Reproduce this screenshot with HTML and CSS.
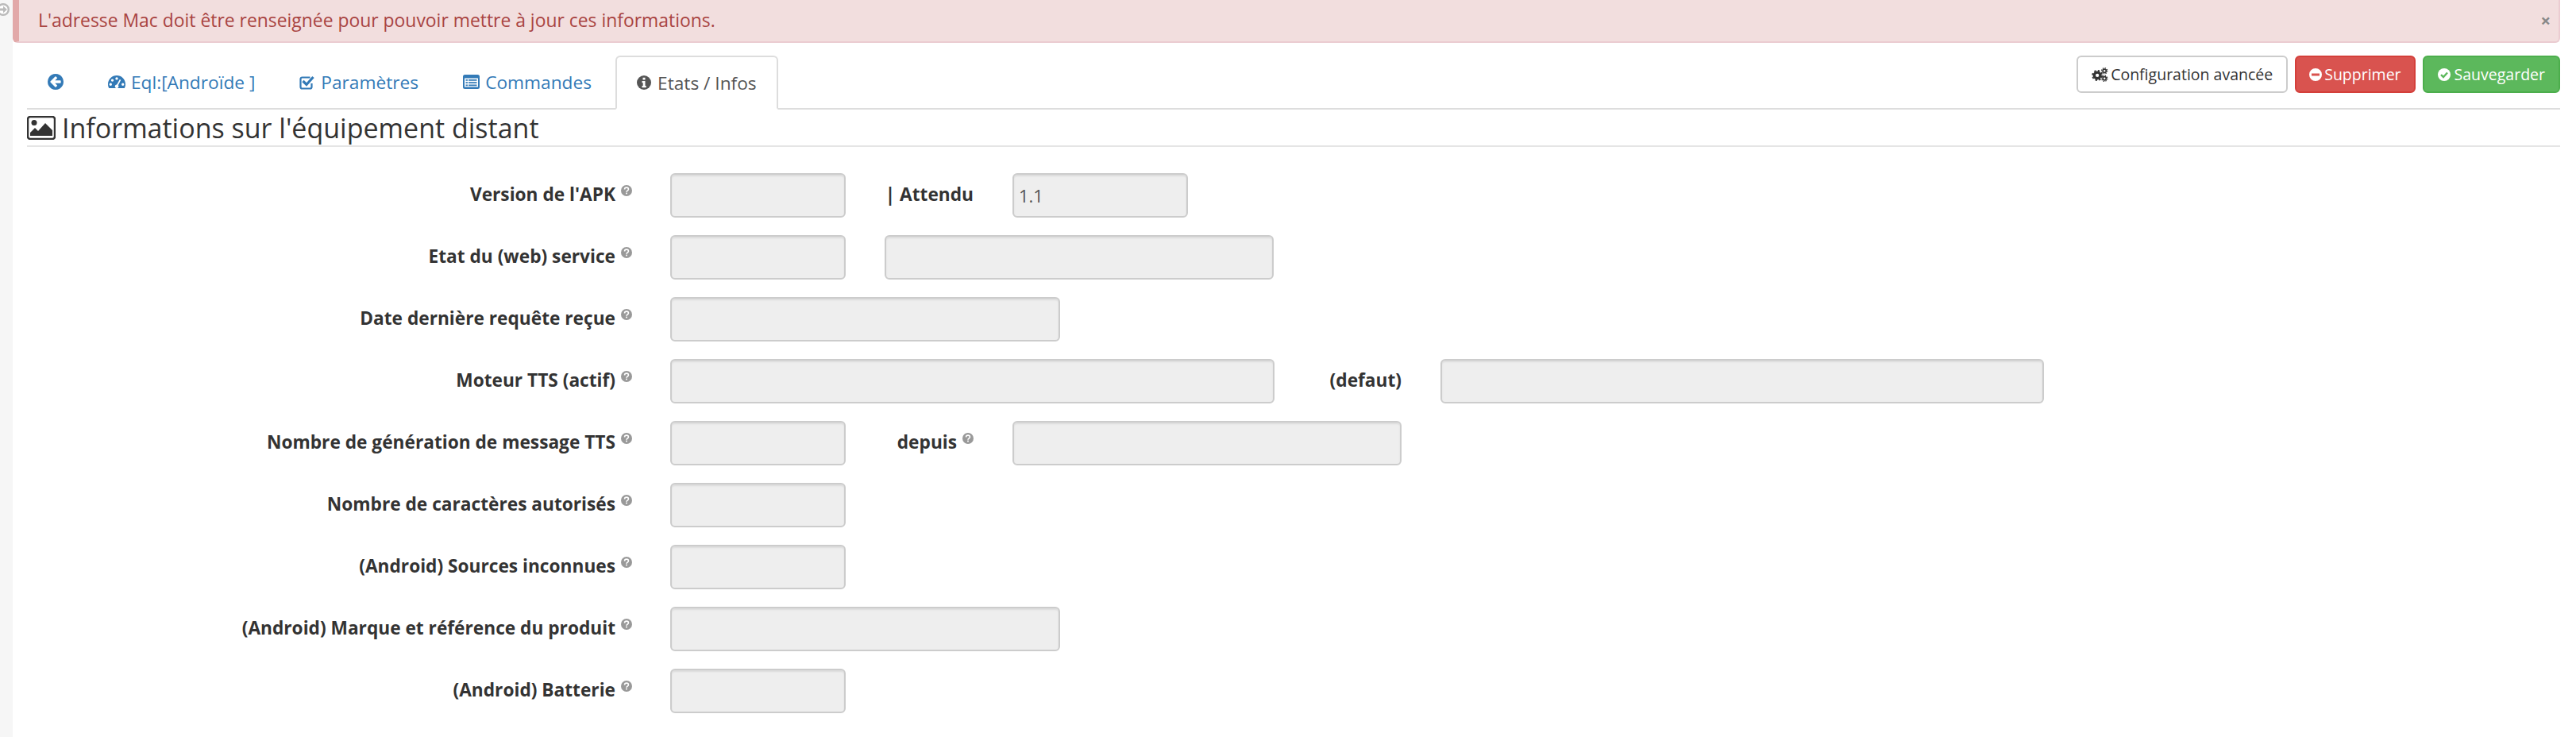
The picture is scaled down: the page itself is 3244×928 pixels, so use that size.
FILE: index.html

```html
<!DOCTYPE html>
<html lang="en">
<head>
    <meta charset="UTF-8">
    <title>Equipement</title>
    <link rel="stylesheet" href="styles.css">
</head>
<body>
    <svg class="defs" width="0" height="0">
        <symbol id="q" viewBox="0 0 16 16">
            <circle cx="8" cy="8" r="8" fill="currentColor"/>
            <path d="M5.2 6.2c0-1.6 1.2-2.6 2.8-2.6s2.8 1 2.8 2.4c0 2.2-2.8 2-2.8 4" fill="none" stroke="#fff" stroke-width="1.9"/>
            <rect x="7" y="11" width="2" height="2" fill="#fff"/>
        </symbol>
    </svg>

    <div class="side">
        <svg class="side-toggle" viewBox="0 0 16 16"><circle cx="8" cy="8" r="6.800" fill="#fff" stroke="#bbb" stroke-width="2.400"/><path d="M3 6.5h5V3.5L13 8l-5 4.500V9.500H3z" fill="#bbb"/></svg>
    </div>

    <div class="main">
        <div class="alert">
            <span>L'adresse Mac doit être renseignée pour pouvoir mettre à jour ces informations.</span>
            <span class="close">×</span>
        </div>

        <div class="tabbar">
            <ul class="tabs">
                <li><a href="#"><svg class="ico ico-back" viewBox="128 128 1536 1536"><path fill="currentColor" d="M1408 960v-128q0-26-19-45t-45-19h-502l189-189q19-19 19-45t-19-45l-91-91q-18-18-45-18t-45 18l-362 362-91 91q-18 18-18 45t18 45l91 91 362 362q18 18 45 18t45-18l91-91q18-18 18-45t-18-45l-189-189h502q26 0 45-19t19-45zm256-64q0 209-103 385.500t-279.500 279.500-385.500 103-385.500-103-279.500-279.500-103-385.500 103-385.500 279.500-279.500 385.500-103 385.500 103 279.500 279.500 103 385.500z"/></svg></a></li>
                <li><a href="#"><svg class="ico ico-gauge" viewBox="0 0 22 18"><path fill="currentColor" fill-rule="evenodd" d="M11 1C5 1 0 5.800 0 12c0 2 .5 3.700 1.300 5h19.400c.8-1.300 1.300-3 1.300-5C22 5.800 17 1 11 1zM11 3.200a1.700 1.700 0 1 1 0 3.400 1.700 1.700 0 0 1 0-3.400zM5.500 5.400a1.700 1.700 0 1 1 0 3.400 1.700 1.700 0 0 1 0-3.400zM3.300 10.600a1.700 1.700 0 1 1 0 3.400 1.700 1.700 0 0 1 0-3.400zM18.700 10.600a1.700 1.700 0 1 1 0 3.400 1.700 1.700 0 0 1 0-3.400zM14.800 6l1.500.8-3.500 6.400a2.300 2.300 0 1 1-1.600-.8z"/></svg>Eql:[Androïde ]</a></li>
                <li><a href="#"><svg class="ico ico-check" viewBox="0 0 19 19"><path fill="none" stroke="currentColor" stroke-width="2.200" d="M15.500 11v4.500a2 2 0 0 1-2 2h-10a2 2 0 0 1-2-2v-10a2 2 0 0 1 2-2h10"/><path fill="none" stroke="currentColor" stroke-width="3.200" d="M4.500 8 9 12.500 17.500 3"/></svg>Paramètres</a></li>
                <li><a href="#"><svg class="ico ico-list" viewBox="0 0 21 18"><path fill="currentColor" fill-rule="evenodd" d="M2.500 0h16A2.500 2.500 0 0 1 21 2.500v13a2.500 2.500 0 0 1-2.500 2.500h-16A2.500 2.500 0 0 1 0 15.500v-13A2.500 2.500 0 0 1 2.500 0zM2 4.500v11h17v-11zM3.500 6h2.500v1.800H3.500zM7 6h10.500v1.800H7zM3.500 9.200h2.500V11H3.500zM7 9.200h10.500V11H7zM3.500 12.400h2.500v1.800H3.500zM7 12.400h10.500v1.800H7z"/></svg>Commandes</a></li>
                <li class="active"><a href="#"><svg class="ico ico-info" viewBox="0 0 18 18"><circle cx="9" cy="9" r="9" fill="currentColor"/><path fill="#fff" d="M7.500 2.800h3v2.600h-3zM6.500 7h4v6h1.200v2.200H6.500V13h1.200V9.200H6.500z"/></svg>Etats / Infos</a></li>
            </ul>
            <div class="actions">
                <a class="btn btn-default" href="#"><svg class="ico ico-cogs" viewBox="0 0 22 18"><g fill="none" stroke="currentColor"><circle cx="7.500" cy="10" r="4" stroke-width="3.500"/><circle cx="7.500" cy="10" r="6.300" stroke-width="2" stroke-dasharray="2.500 2.450"/><circle cx="17" cy="4" r="2.200" stroke-width="1.800"/><circle cx="17" cy="4" r="3.800" stroke-width="1.300" stroke-dasharray="1.500 1.480"/><circle cx="17" cy="14" r="2.200" stroke-width="1.800"/><circle cx="17" cy="14" r="3.800" stroke-width="1.300" stroke-dasharray="1.500 1.480"/></g></svg>Configuration avancée</a>
                <a class="btn btn-danger" href="#"><svg class="ico ico-state" viewBox="0 0 16 16"><path fill="currentColor" fill-rule="evenodd" d="M8 0a8 8 0 1 1 0 16A8 8 0 0 1 8 0zM3 6.600v2.800h10V6.600z"/></svg>Supprimer</a>
                <a class="btn btn-success" href="#"><svg class="ico ico-state" viewBox="0 0 16 16"><circle cx="8" cy="8" r="8" fill="currentColor"/><path d="M4 8.200 7 11l5-5.500" fill="none" stroke="#5cb85c" stroke-width="2.400"/></svg>Sauvegarder</a>
            </div>
        </div>

        <h3 class="legend"><svg class="ico-picture" viewBox="0 0 36 30"><rect x="1" y="1" width="34" height="28" rx="3" fill="#fff" stroke="#333" stroke-width="2.500"/><circle cx="9" cy="8.500" r="3.500" fill="#333"/><path d="M4 25v-4l6-6 4 4 9-10 9 9v7z" fill="#333"/></svg>Informations sur l'équipement distant</h3>

        <form class="form">
            <div class="row">
                <label class="lbl">Version de l'APK<svg class="help"><use href="#q"/></svg></label>
                <input class="field w-s" disabled>
                <label class="lbl lbl-mid">| Attendu</label>
                <input class="field w-s" value="1.1" disabled>
            </div>
            <div class="row">
                <label class="lbl">Etat du (web) service<svg class="help"><use href="#q"/></svg></label>
                <input class="field w-s" disabled>
                <input class="field w-m2 gap-l" disabled>
            </div>
            <div class="row">
                <label class="lbl">Date dernière requête reçue<svg class="help"><use href="#q"/></svg></label>
                <input class="field w-m" disabled>
            </div>
            <div class="row">
                <label class="lbl">Moteur TTS (actif)<svg class="help"><use href="#q"/></svg></label>
                <input class="field w-l" disabled>
                <label class="lbl lbl-mid lbl-wide">(defaut)</label>
                <input class="field w-l2" disabled>
            </div>
            <div class="row">
                <label class="lbl">Nombre de génération de message TTS<svg class="help"><use href="#q"/></svg></label>
                <input class="field w-s" disabled>
                <label class="lbl lbl-mid">depuis<svg class="help"><use href="#q"/></svg></label>
                <input class="field w-m2" disabled>
            </div>
            <div class="row">
                <label class="lbl">Nombre de caractères autorisés<svg class="help"><use href="#q"/></svg></label>
                <input class="field w-s" disabled>
            </div>
            <div class="row">
                <label class="lbl">(Android) Sources inconnues<svg class="help"><use href="#q"/></svg></label>
                <input class="field w-s" disabled>
            </div>
            <div class="row">
                <label class="lbl">(Android) Marque et référence du produit<svg class="help"><use href="#q"/></svg></label>
                <input class="field w-m" disabled>
            </div>
            <div class="row">
                <label class="lbl">(Android) Batterie<svg class="help"><use href="#q"/></svg></label>
                <input class="field w-s" disabled>
            </div>
        </form>
    </div>
</body>
</html>
```

FILE: styles.css

```css
* { box-sizing: border-box; }
html, body { height: 100%; }
body { margin: 0; display: flex; font-family: "Open Sans", sans-serif; font-size: 22.9px; color: #333; background: #fff; overflow: hidden; }
a { text-decoration: none; }
.defs { position: absolute; }

.side { width: 16px; flex: none; background: #f6f6f6; position: relative; overflow: hidden; }
.side-toggle { position: absolute; left: -4px; top: 4px; width: 16px; height: 16px; }

.main { width: 3208px; flex: none; }

.alert { height: 54px; display: flex; justify-content: space-between; align-items: center; padding: 0 10px 2px 24px; background: #f2dede; color: #a94442; border: 2px solid #ebccd1; border-left: 8px solid #e2a9a9; border-top: 0; border-radius: 0 0 6px 6px; }
.close { color: #888; font-weight: 700; font-size: 22px; line-height: 1; }

.tabbar { margin: 16px 0 0 18px; height: 68px; display: flex; justify-content: space-between; border-bottom: 2px solid #ddd; }
.tabs { list-style: none; margin: 0; padding: 0; display: flex; gap: 4px; height: 68px; font-size: 22.7px; }
.tabs a { display: flex; align-items: center; height: 66px; padding: 0 24px; color: #337ab7; border: 2px solid transparent; border-radius: 6px 6px 0 0; }
.tabs .active { background: #fff; height: 68px; }
.tabs .active a { height: 68px; padding: 0 25px; color: #555; background: #fff; border-color: #ddd; border-bottom-color: #fff; }

.ico { flex: none; margin-right: 8px; }
.ico-back { width: 20px; height: 20px; margin: 0; }
.ico-gauge { width: 22px; height: 18px; margin-right: 7px; }
.ico-check { width: 19px; height: 19px; margin-right: 8px; }
.ico-list { width: 21px; height: 18px; margin-right: 7px; }
.ico-info { width: 18px; height: 18px; }
.ico-cogs { width: 21px; height: 18px; margin-right: 3px; }
.ico-state { width: 16px; height: 16px; margin-right: 5px; }

.actions { display: flex; gap: 9px; height: 47px; }
.btn { display: flex; align-items: center; height: 47px; padding: 0 17px; font-size: 19.5px; border: 2px solid; border-radius: 6px; }
.btn-default { color: #333; background: #fff; border-color: #ccc; }
.btn-danger { color: #fff; background: #d9534f; border-color: #d43f3a; padding: 0 16px; }
.btn-danger .ico-state { margin-right: 3px; }
.btn-success { color: #fff; background: #5cb85c; border-color: #4cae4c; }

.legend { margin: 0 0 0 18px; height: 47px; display: flex; align-items: center; font-size: 34px; font-weight: 400; border-bottom: 2px solid #e5e5e5; }
.ico-picture { width: 36px; height: 30px; margin-right: 8px; flex: none; }

.form { margin: 33px 0 0 18px; display: flex; flex-direction: column; gap: 22px; }
.row { display: flex; height: 56px; align-items: center; }
.lbl { width: 810px; flex: none; padding: 0 48px 2px 0; text-align: right; font-size: 22.7px; font-weight: 700; line-height: 1; }
.lbl-mid { width: 210px; padding-right: 49px; }
.lbl-wide { width: 209px; }
.help { width: 14px; height: 14px; margin-left: 7px; color: #999; vertical-align: 6px; }
.field { height: 56px; padding: 0 6px; font: inherit; font-size: 22px; color: #555; background: #eee; border: 2px solid #ccc; border-radius: 6px; box-shadow: inset 0 2px 2px rgba(0,0,0,.075); opacity: 1; }
.w-s { width: 221px; }
.w-m { width: 491px; }
.w-m2 { width: 490px; }
.w-l { width: 761px; }
.w-l2 { width: 760px; }
.gap-l { margin-left: 49px; }
```
